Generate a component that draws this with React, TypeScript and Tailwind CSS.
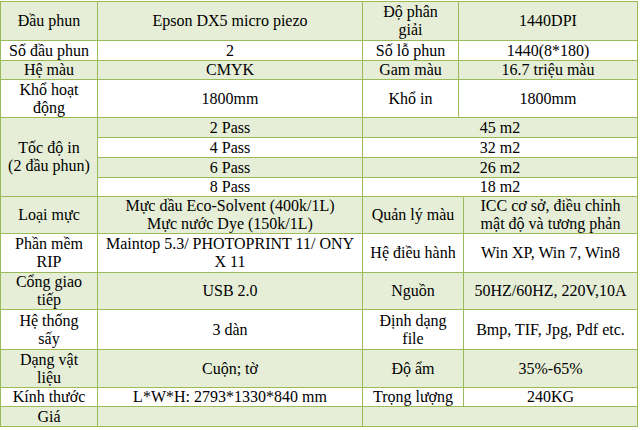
const G = "bg-[#e6eed7]";
const W = "bg-white";

function Cell({
    bg,
    span = "",
    lines = [],
}: {
    bg: string;
    span?: string;
    lines?: string[];
}) {
    return (
        <div
            className={`${bg} ${span} flex flex-col items-center justify-center px-1 leading-[18px] whitespace-nowrap`}
        >
            {lines.map((l) => (
                <span key={l}>{l}</span>
            ))}
        </div>
    );
}

export default function App() {
    return (
        <div className="w-[641px] h-[430px] bg-white pt-px">
            <div
                className="grid w-[638px] gap-px p-px bg-[#9bbb59] text-[16px] text-black grid-cols-[96px_264px_95px_4px_173px] grid-rows-[38px_19px_18px_37px_19px_19px_19px_18px_36px_38px_36px_39px_37px_18px_19px]"
                style={{ fontFamily: '"Liberation Serif", "Times New Roman", serif' }}
            >
                {/* thong so chung */}
                <Cell bg={G} lines={["Đầu phun"]} />
                <Cell bg={G} lines={["Epson DX5 micro piezo"]} />
                <Cell bg={G} lines={["Độ phân", "giải"]} />
                <Cell bg={G} span="col-span-2" lines={["1440DPI"]} />

                <Cell bg={W} lines={["Số đầu phun"]} />
                <Cell bg={W} lines={["2"]} />
                <Cell bg={W} lines={["Số lỗ phun"]} />
                <Cell bg={W} span="col-span-2" lines={["1440(8*180)"]} />

                <Cell bg={G} lines={["Hệ màu"]} />
                <Cell bg={G} lines={["CMYK"]} />
                <Cell bg={G} lines={["Gam màu"]} />
                <Cell bg={G} span="col-span-2" lines={["16.7 triệu màu"]} />

                <Cell bg={W} lines={["Khổ hoạt", "động"]} />
                <Cell bg={W} lines={["1800mm"]} />
                <Cell bg={W} lines={["Khổ in"]} />
                <Cell bg={W} span="col-span-2" lines={["1800mm"]} />

                {/* toc do in */}
                <Cell bg={G} span="row-span-4" lines={["Tốc độ in", "(2 đầu phun)"]} />
                <Cell bg={G} lines={["2 Pass"]} />
                <Cell bg={G} span="col-span-3" lines={["45 m2"]} />
                <Cell bg={W} lines={["4 Pass"]} />
                <Cell bg={W} span="col-span-3" lines={["32 m2"]} />
                <Cell bg={G} lines={["6 Pass"]} />
                <Cell bg={G} span="col-span-3" lines={["26 m2"]} />
                <Cell bg={W} lines={["8 Pass"]} />
                <Cell bg={W} span="col-span-3" lines={["18 m2"]} />

                {/* muc, phan mem, dien */}
                <Cell bg={G} lines={["Loại mực"]} />
                <Cell
                    bg={G}
                    lines={["Mực dầu Eco-Solvent (400k/1L)", "Mực nước Dye (150k/1L)"]}
                />
                <Cell bg={G} span="col-span-2" lines={["Quản lý màu"]} />
                <Cell bg={G} lines={["ICC cơ sở, điều chỉnh", "mật độ và tương phản"]} />

                <Cell bg={W} lines={["Phần mềm", "RIP"]} />
                <Cell bg={W} lines={["Maintop 5.3/ PHOTOPRINT 11/ ONY", "X 11"]} />
                <Cell bg={W} span="col-span-2" lines={["Hệ điều hành"]} />
                <Cell bg={W} lines={["Win XP, Win 7, Win8"]} />

                <Cell bg={G} lines={["Cổng giao", "tiếp"]} />
                <Cell bg={G} lines={["USB 2.0"]} />
                <Cell bg={G} span="col-span-2" lines={["Nguồn"]} />
                <Cell bg={G} lines={["50HZ/60HZ, 220V,10A"]} />

                <Cell bg={W} lines={["Hệ thống", "sấy"]} />
                <Cell bg={W} lines={["3 dàn"]} />
                <Cell bg={W} span="col-span-2" lines={["Định dạng", "file"]} />
                <Cell bg={W} lines={["Bmp, TIF, Jpg, Pdf etc."]} />

                <Cell bg={G} lines={["Dạng vật", "liệu"]} />
                <Cell bg={G} lines={["Cuộn; tờ"]} />
                <Cell bg={G} span="col-span-2" lines={["Độ ẩm"]} />
                <Cell bg={G} lines={["35%-65%"]} />

                <Cell bg={W} lines={["Kính thước"]} />
                <Cell bg={W} lines={["L*W*H: 2793*1330*840 mm"]} />
                <Cell bg={W} span="col-span-2" lines={["Trọng lượng"]} />
                <Cell bg={W} lines={["240KG"]} />

                <Cell bg={G} lines={["Giá"]} />
                <Cell bg={G} />
                <Cell bg={G} span="col-span-3" />
            </div>
        </div>
    );
}
